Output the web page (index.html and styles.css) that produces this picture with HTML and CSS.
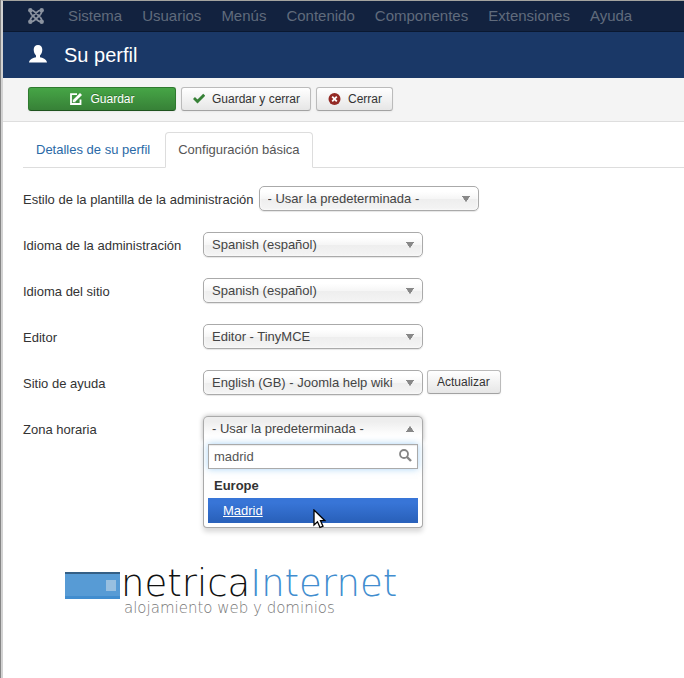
FILE: index.html
```html
<!DOCTYPE html>
<html lang="es">
<head>
<meta charset="utf-8">
<title>Su perfil</title>
<link rel="stylesheet" href="styles.css">
</head>
<body>
<nav class="navbar">
  <a class="brand" href="#" aria-label="Joomla">
    <svg width="16" height="16" viewBox="0 0 16 16" fill="none" stroke="#8b93a0" stroke-width="1.800">
      <path d="M3.800 6.800L9.300 12.200C10.500 13.400 12 13.800 13.500 13.500M12.200 6.800L6.700 12.200C5.500 13.400 4 13.800 2.500 13.500M3.800 9.200L9.300 3.800C10.500 2.600 12 2.200 13.500 2.500M12.200 9.200L6.700 3.800C5.500 2.600 4 2.200 2.500 2.500"/>
      <path d="M2.500 2.500C2.200 4.300 2.600 5.600 3.800 6.800M13.500 2.500C13.800 4.300 13.400 5.600 12.200 6.800M2.500 13.500C2.200 11.700 2.600 10.400 3.800 9.200M13.500 13.500C13.800 11.700 13.400 10.400 12.200 9.200"/>
      <g fill="#8b93a0" stroke="none"><circle cx="2.300" cy="2.300" r="2.200"/><circle cx="13.700" cy="2.300" r="2.200"/><circle cx="2.300" cy="13.700" r="2.200"/><circle cx="13.700" cy="13.700" r="2.200"/></g>
    </svg>
  </a>
  <a href="#">Sistema</a>
  <a href="#">Usuarios</a>
  <a href="#">Menús</a>
  <a href="#">Contenido</a>
  <a href="#">Componentes</a>
  <a href="#">Extensiones</a>
  <a href="#">Ayuda</a>
</nav>
<header class="header">
  <svg width="18" height="18" viewBox="0 0 18 18" fill="#fff"><path d="M9 0C6.300 0 4.700 1.900 4.700 4.600C4.700 7 5.600 9.400 7 10.500V12.200C4.500 12.800 .5 13.800 0 17.500H18C17.500 13.800 13.500 12.800 11 12.200V10.500C12.400 9.400 13.300 7 13.300 4.600C13.300 1.900 11.700 0 9 0Z"/></svg>
  <h1>Su perfil</h1>
</header>
<div class="toolbar">
  <button class="btn btn-save" type="button">
    <svg width="12" height="12" viewBox="0 0 12 12" fill="none" stroke="#fff" stroke-width="1.800"><path d="M7 1.200H1V11H10.500V6.500"/><path d="M4.200 7.800L11 1" stroke-width="2.800"/><path d="M2.800 6.200V9.200H5.800Z" fill="#fff" stroke="none"/></svg>
    Guardar
  </button>
  <button class="btn" type="button">
    <svg width="12" height="12" viewBox="0 0 12 12" fill="none" stroke="#378137" stroke-width="2.800"><path d="M1 5L4.500 8.500L11.200 1.800"/></svg>
    Guardar y cerrar
  </button>
  <button class="btn" type="button">
    <svg width="13" height="13" viewBox="0 0 13 13"><circle cx="6.500" cy="6" r="6" fill="#942a25"/><path d="M4.200 3.700L8.800 8.300M8.800 3.700L4.200 8.300" stroke="#fff" stroke-width="1.800"/></svg>
    Cerrar
  </button>
</div>
<main class="content">
  <div class="tabs">
    <a class="tab" href="#">Detalles de su perfil</a>
    <a class="tab active" href="#">Configuración básica</a>
  </div>
  <form class="form">
    <div class="row">
      <label for="style">Estilo de la plantilla de la administración</label>
      <select id="style"><option>- Usar la predeterminada -</option></select>
    </div>
    <div class="row">
      <label for="admin-lang">Idioma de la administración</label>
      <select id="admin-lang"><option>Spanish (español)</option></select>
    </div>
    <div class="row">
      <label for="site-lang">Idioma del sitio</label>
      <select id="site-lang"><option>Spanish (español)</option></select>
    </div>
    <div class="row">
      <label for="editor">Editor</label>
      <select id="editor"><option>Editor - TinyMCE</option></select>
    </div>
    <div class="row">
      <label for="help">Sitio de ayuda</label>
      <select id="help"><option>English (GB) - Joomla help wiki</option></select>
      <button class="btn btn-refresh" type="button">Actualizar</button>
    </div>
    <div class="row">
      <label for="timezone">Zona horaria</label>
      <div class="chosen">
        <select id="timezone" class="open"><option>- Usar la predeterminada -</option></select>
        <div class="drop">
          <div class="search">
            <input type="text" value="madrid" aria-label="Buscar zona horaria">
            <svg width="13" height="13" viewBox="0 0 13 13" fill="none" stroke="#858585"><circle cx="5" cy="5" r="4" stroke-width="1.800"/><path d="M8 8L12 12" stroke-width="2.400"/></svg>
          </div>
          <div class="group">Europe</div>
          <a class="result" href="#">Madrid</a>
          <svg class="cursor" width="13" height="20" viewBox="0 0 13 20"><path d="M1 1V16L4.500 12.800L7 18.500L10 17.200L7.500 11.700H12Z" fill="#fff" stroke="#000" stroke-width="1.300"/></svg>
        </div>
      </div>
    </div>
  </form>
  <footer class="logo">
    <svg width="55" height="27" viewBox="0 0 55 27"><path fill="#579bd5" d="M0 0H55V27H0Z"/><path fill="#345f86" d="M0 0H55V2H0Z"/><path fill="#418dcf" d="M0 24H55V27H0Z"/><path fill="#98bfe0" d="M41 8H51V19H41Z"/></svg>
    <div>
      <div class="logo-name">netrica<span>Internet</span></div>
      <div class="logo-tag">alojamiento web y dominios</div>
    </div>
  </footer>
</main>
</body>
</html>
```
FILE: styles.css
```css
* { box-sizing: border-box; }
html {
  display: flex;
  flex-direction: column;
  min-height: 100%;
  border-left: 1px solid #858585;
  background: #fff;
}
body {
  flex: 1;
  margin: 0;
  border-left: 2px solid #d2d2d2;
  border-top: 1px solid #a4a4a0;
  background: #fff;
  color: #333;
  font: 13px/18px "Liberation Sans", Arial, sans-serif;
}
a { text-decoration: none; }
.navbar {
  display: flex;
  align-items: center;
  gap: 20px;
  height: 31px;
  padding-left: 25px;
  background: #12223f;
  border-bottom: 1px solid #0a1830;
  font-size: 15px;
}
.navbar a { color: #606b7c; }
.navbar .brand { display: flex; margin-right: 4px; }
.header {
  display: flex;
  align-items: center;
  gap: 17px;
  height: 46px;
  padding-left: 26px;
  background: #1a3867;
  color: #fff;
}
.header svg { margin-bottom: 2px; }
h1 { margin: 0; font-size: 20px; line-height: 24px; font-weight: normal; }
.toolbar {
  display: flex;
  gap: 5px;
  height: 44px;
  padding: 9px 25px;
  background: #f4f4f4;
  border-bottom: 1px solid #dedede;
}
.btn {
  display: flex;
  align-items: center;
  justify-content: center;
  gap: 7px;
  height: 24px;
  padding: 0 10px 0 11px;
  border: 1px solid #bbb;
  border-bottom-color: #a2a2a2;
  border-radius: 3px;
  background: linear-gradient(#fff, #e6e6e6);
  box-shadow: 0 1px 2px rgba(0, 0, 0, .05);
  color: #333;
  font: 12px/18px "Liberation Sans", Arial, sans-serif;
}
.btn-save {
  width: 148px;
  gap: 8px;
  border-color: #2f7a2f #2f7a2f #1f531f;
  background: linear-gradient(#46a546, #378137);
  color: #fff;
  text-shadow: 0 -1px 0 rgba(0, 0, 0, .25);
}
.content { padding-left: 20px; }
.tabs { display: flex; margin-top: 10px; border-bottom: 1px solid #ddd; }
.tab {
  height: 36px;
  margin: 0 2px -1px 0;
  padding: 8px 12px;
  border: 1px solid transparent;
  border-radius: 4px 4px 0 0;
  color: #2a69a6;
}
.tab.active { background: #fff; border-color: #ddd #ddd #fff; color: #555; }
.form { display: flex; flex-direction: column; gap: 20px; padding-top: 18px; }
.row { display: flex; align-items: flex-start; height: 26px; }
.row label { flex: none; min-width: 175px; margin: 5px 5px 0 0; }
select {
  appearance: none;
  width: 220px;
  height: 25px;
  padding: 0 8px;
  border: 1px solid #aaa;
  border-radius: 5px;
  background:
    linear-gradient(to bottom left, #888 50%, transparent 54%) right 12px top 9px / 4px 6px no-repeat,
    linear-gradient(to bottom right, #888 50%, transparent 54%) right 8px top 9px / 4px 6px no-repeat,
    linear-gradient(#fff 20%, #f6f6f6 50%, #eee 52%, #f4f4f4);
  box-shadow: inset 0 0 3px #fff, 0 1px 1px rgba(0, 0, 0, .1);
  color: #444;
  font: 13px/23px "Liberation Sans", Arial, sans-serif;
}
select.open {
  display: block;
  border-bottom-color: transparent;
  border-radius: 5px 5px 0 0;
  background:
    linear-gradient(to top left, #888 50%, transparent 54%) right 12px top 9px / 4px 6px no-repeat,
    linear-gradient(to top right, #888 50%, transparent 54%) right 8px top 9px / 4px 6px no-repeat,
    linear-gradient(#eee 20%, #fff 80%);
  box-shadow: 0 0 5px rgba(0, 0, 0, .3);
}
.btn-refresh { margin-left: 4px; padding: 0 10px 0 9px; }
.chosen { position: relative; }
.drop {
  position: absolute;
  top: 24px;
  left: 0;
  width: 220px;
  padding: 4px;
  border: 1px solid #aaa;
  border-top: 0;
  border-radius: 0 0 4px 4px;
  background: #fff;
  box-shadow: 0 4px 5px rgba(0, 0, 0, .15);
}
.search { position: relative; }
.search input {
  display: block;
  width: 100%;
  height: 25px;
  padding: 0 24px 0 5px;
  border: 1px solid #aaa;
  outline: 0;
  box-shadow: inset 0 1px 1px rgba(0, 0, 0, .08), 0 0 7px rgba(82, 168, 236, .5);
  color: #555;
  font: 13px/18px "Liberation Sans", Arial, sans-serif;
}
.search svg { position: absolute; top: 5px; right: 6px; }
.group { height: 29px; padding: 8px 6px 0; font-weight: bold; }
.result {
  display: block;
  height: 25px;
  padding: 4px 15px 3px;
  background: linear-gradient(#3875d7 20%, #2a62bc 90%);
  color: #fff;
  text-decoration: underline;
}
.cursor { position: absolute; left: 109px; bottom: -2px; }
.logo { display: flex; gap: 1px; margin-top: 122px; padding-left: 42px; }
.logo svg { flex: none; margin-top: 8px; }
.logo-name {
  color: #111;
  font: 200 37px/40px "DejaVu Sans Light", "DejaVu Sans", sans-serif;
}
.logo-name span { color: #418dcf; }
.logo-tag {
  margin-top: -4px;
  padding-left: 3px;
  color: #777;
  font: 200 15px/16px "DejaVu Sans Light", "DejaVu Sans", sans-serif;
}
```
